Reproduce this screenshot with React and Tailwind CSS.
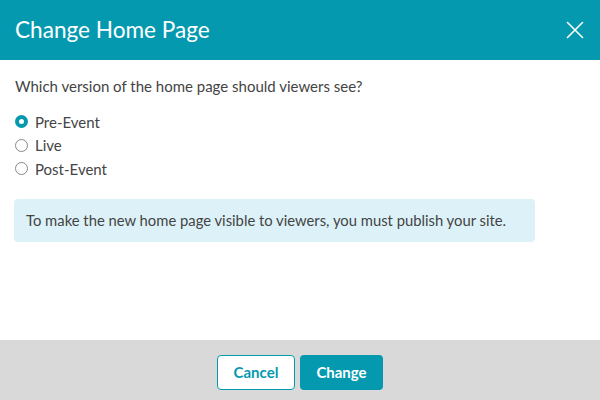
import { X } from 'lucide-react';

const OPTIONS = ['Pre-Event', 'Live', 'Post-Event'];

export default function App() {
  const selected = 'Pre-Event';

  return (
    <div className="w-[600px] h-[400px] flex flex-col bg-white overflow-hidden"
      style={{ fontFamily: 'Lato, "Open Sans", sans-serif' }}>
      {/* Header */}
      <div className="h-[60px] bg-[#0599b0] flex items-center justify-between pl-[15px] pr-[10px]">
        <h1 className="text-white text-[22.6px] leading-none">Change Home Page</h1>
        <X size={30} strokeWidth={1.3} className="text-white" />
      </div>

      {/* Body */}
      <div className="flex-1 px-[15px] pt-[16px]">
        <p className="text-[15px] text-[#444] leading-5">Which version of the home page should viewers see?</p>
        <div className="mt-[14px] flex flex-col">
          {OPTIONS.map(opt => (
            <label key={opt} className="flex items-center gap-[7px] h-[23.5px]">
              {opt === selected ? (
                <span className="w-[13px] h-[13px] rounded-full bg-[#0599b0] flex items-center justify-center">
                  <span className="w-[5px] h-[5px] rounded-full bg-white" />
                </span>
              ) : (
                <span className="w-[13px] h-[13px] rounded-full border border-[#888] bg-white" />
              )}
              <span className="text-[15px] text-[#444]">{opt}</span>
            </label>
          ))}
        </div>
        <div className="mt-[18px] w-[521px] h-[43px] -ml-px rounded bg-[#dcf2f8] flex items-center pl-[12px]">
          <span className="text-[14.8px] text-[#444]">To make the new home page visible to viewers, you must publish your site.</span>
        </div>
      </div>

      {/* Footer */}
      <div className="h-[60px] bg-[#d9d9d9] flex items-center justify-center gap-[5px] pt-[5px]">
        <button className="w-[78px] h-[35px] rounded bg-white border border-[#0599b0] text-[#0599b0] text-[15px] font-bold">
          Cancel
        </button>
        <button className="w-[83px] h-[35px] rounded bg-[#0599b0] text-white text-[15px] font-bold">
          Change
        </button>
      </div>
    </div>
  );
}
